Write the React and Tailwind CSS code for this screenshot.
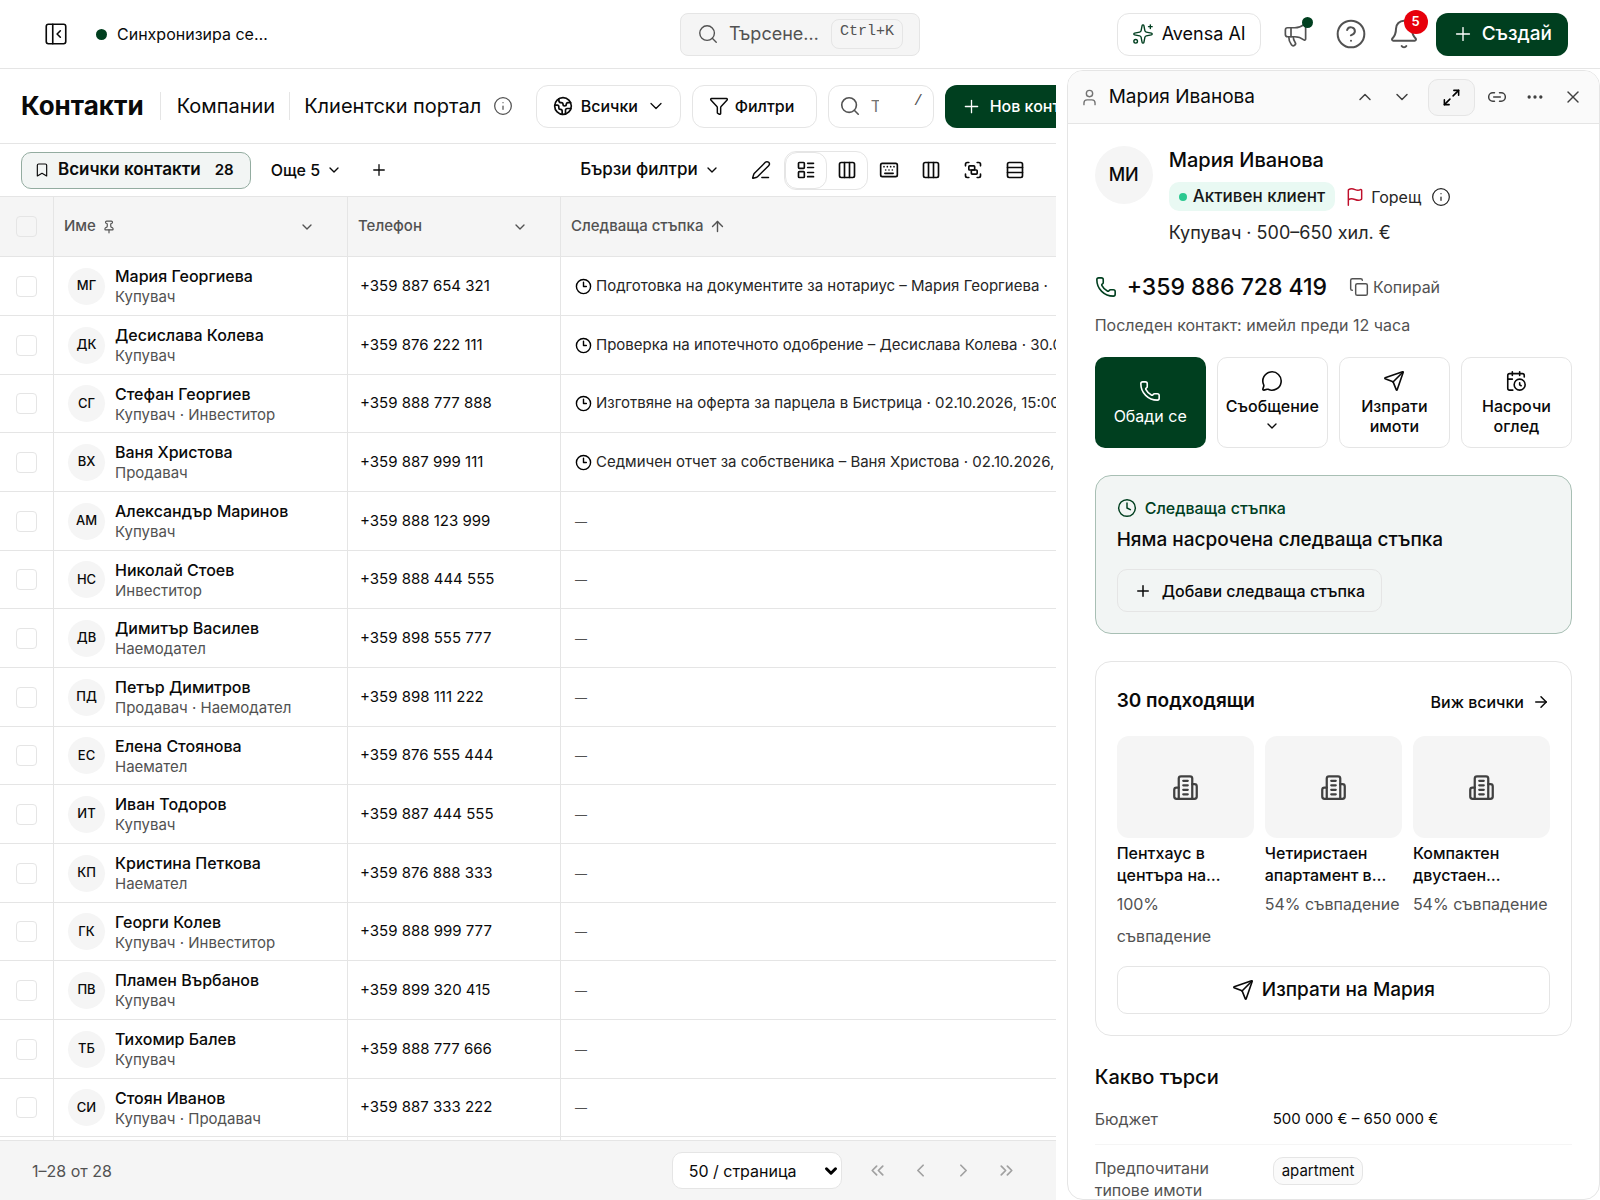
import {
  ArrowRight,
  ArrowUp,
  Bell,
  Bookmark,
  CalendarClock,
  ChevronDown,
  ChevronLeft,
  ChevronRight,
  ChevronsLeft,
  ChevronsRight,
  ChevronUp,
  CircleHelp,
  Clock,
  Clock3,
  Columns3,
  Copy,
  Earth,
  Ellipsis,
  Filter,
  Flag,
  Group,
  Info,
  Keyboard,
  LayoutList,
  Link2,
  Maximize2,
  Megaphone,
  MessageCircle,
  PanelLeftClose,
  PenLine,
  Phone,
  Pin,
  Plus,
  Rows3,
  Search,
  Send,
  Sparkles,
  User,
  X,
} from "lucide-react";

const contacts = [
  { initials: "МГ", name: "Мария Георгиева", role: "Купувач", phone: "+359 887 654 321", next: "Подготовка на документите за нотариус – Мария Георгиева ·" },
  { initials: "ДК", name: "Десислава Колева", role: "Купувач", phone: "+359 876 222 111", next: "Проверка на ипотечното одобрение – Десислава Колева · 30.09.2026" },
  { initials: "СГ", name: "Стефан Георгиев", role: "Купувач · Инвеститор", phone: "+359 888 777 888", next: "Изготвяне на оферта за парцела в Бистрица · 02.10.2026, 15:00" },
  { initials: "ВХ", name: "Ваня Христова", role: "Продавач", phone: "+359 887 999 111", next: "Седмичен отчет за собственика – Ваня Христова · 02.10.2026," },
  { initials: "АМ", name: "Александър Маринов", role: "Купувач", phone: "+359 888 123 999" },
  { initials: "НС", name: "Николай Стоев", role: "Инвеститор", phone: "+359 888 444 555" },
  { initials: "ДВ", name: "Димитър Василев", role: "Наемодател", phone: "+359 898 555 777" },
  { initials: "ПД", name: "Петър Димитров", role: "Продавач · Наемодател", phone: "+359 898 111 222" },
  { initials: "ЕС", name: "Елена Стоянова", role: "Наемател", phone: "+359 876 555 444" },
  { initials: "ИТ", name: "Иван Тодоров", role: "Купувач", phone: "+359 887 444 555" },
  { initials: "КП", name: "Кристина Петкова", role: "Наемател", phone: "+359 876 888 333" },
  { initials: "ГК", name: "Георги Колев", role: "Купувач · Инвеститор", phone: "+359 888 999 777" },
  { initials: "ПВ", name: "Пламен Върбанов", role: "Купувач", phone: "+359 899 320 415" },
  { initials: "ТБ", name: "Тихомир Балев", role: "Купувач", phone: "+359 888 777 666" },
  { initials: "СИ", name: "Стоян Иванов", role: "Купувач · Продавач", phone: "+359 887 333 222" },
];

const matches = [
  { title: "Пентхаус в центъра на…", score: "100% съвпадение" },
  { title: "Четиристаен апартамент в…", score: "54% съвпадение" },
  { title: "Компактен двустаен…", score: "54% съвпадение" },
];

const BuildingIcon = () => (
  <svg
    width="27"
    height="27"
    viewBox="0 0 24 24"
    fill="none"
    stroke="currentColor"
    strokeWidth="2"
    strokeLinecap="round"
    strokeLinejoin="round"
    aria-hidden="true"
  >
    <path d="M6 22V4a2 2 0 0 1 2-2h8a2 2 0 0 1 2 2v18Z" />
    <path d="M6 12H4a2 2 0 0 0-2 2v6a2 2 0 0 0 2 2h2" />
    <path d="M18 9h2a2 2 0 0 1 2 2v9a2 2 0 0 1-2 2h-2" />
    <path d="M10 6h4M10 10h4M10 14h4M10 18h4" />
  </svg>
);

const Checkbox = ({ label }) => (
  <input
    type="checkbox"
    aria-label={label}
    className="block mx-auto size-[21px] appearance-none rounded border border-neutral-200 checked:bg-[#003f1f]"
  />
);

/* ---------- Top bar ---------- */

const TopBar = () => (
  <header className="flex h-[69px] shrink-0 items-center justify-between border-b border-neutral-200 px-8">
    <div className="flex flex-1 items-center">
      <button type="button" aria-label="Меню" className="ml-[11px]">
        <PanelLeftClose size={26} strokeWidth={1.5} />
      </button>
      <span className="ml-[27px] size-[11px] rounded-full bg-[#003f1f]" />
      <span className="ml-2.5">Синхронизира се…</span>
    </div>

    <button
      type="button"
      className="flex h-[43px] w-60 items-center rounded-lg border border-neutral-200 bg-neutral-100 pl-4 text-lg text-neutral-600"
    >
      <Search size={22} strokeWidth={1.5} />
      <span className="ml-2.5">Търсене…</span>
      <kbd className="ml-auto mr-4 flex h-[30px] w-[72px] justify-center rounded-lg border border-neutral-200 pt-0.5 text-[15px] leading-5 font-[Liberation_Mono,monospace]">
        Ctrl+K
      </kbd>
    </button>

    <div className="flex flex-1 items-center justify-end">
      <button
        type="button"
        className="flex h-[43px] items-center gap-2 rounded-xl border border-neutral-200 px-3.5 text-lg"
      >
        <Sparkles size={22} strokeWidth={1.5} className="text-[#003f1f]" />
        Avensa AI
      </button>
      <button type="button" aria-label="Новини" className="relative ml-[21px] text-neutral-600">
        <Megaphone size={27} strokeWidth={1.5} />
        <span className="absolute -top-1 -right-1 size-[11px] rounded-full bg-[#003f1f]" />
      </button>
      <button type="button" aria-label="Помощ" className="ml-[26px] text-neutral-600">
        <CircleHelp size={32} strokeWidth={1.5} />
      </button>
      <button type="button" aria-label="Известия" className="relative ml-[21px] text-neutral-600">
        <Bell size={32} strokeWidth={1.5} />
        <span className="absolute -top-2 -right-2 flex size-6 items-center justify-center rounded-full bg-red-600 text-[13px] font-semibold text-white">
          5
        </span>
      </button>
      <button
        type="button"
        className="ml-4 flex h-[43px] items-center gap-2 rounded-xl bg-[#003f1f] px-4 text-[19px] font-medium text-white"
      >
        <Plus size={22} strokeWidth={1.5} />
        Създай
      </button>
    </div>
  </header>
);

/* ---------- Contacts list ---------- */

const PageTabs = () => (
  <div className="flex h-[75px] shrink-0 items-center overflow-hidden border-b border-neutral-200 pl-[21px] whitespace-nowrap">
    <nav className="flex shrink-0 items-center text-xl">
      <a href="#contacts" className="text-[26px] font-bold">
        Контакти
      </a>
      <a href="#companies" className="ml-4 border-l border-neutral-200 pl-4">
        Компании
      </a>
      <a href="#portal" className="ml-3.5 border-l border-neutral-200 pl-3.5">
        Клиентски портал
      </a>
    </nav>
    <button type="button" aria-label="Информация" className="ml-3 shrink-0 text-neutral-600">
      <Info size={20} strokeWidth={1.5} />
    </button>
    <div className="ml-auto flex shrink-0 items-center gap-[11px] font-medium">
      <button
        type="button"
        className="flex h-[43px] w-[145px] items-center gap-2 rounded-xl border border-neutral-200 pl-4"
      >
        <Earth size={20} />
        Всички
        <ChevronDown size={20} strokeWidth={1.5} />
      </button>
      <button
        type="button"
        className="flex h-[43px] w-[125px] items-center gap-1.5 rounded-xl border border-neutral-200 pl-4"
      >
        <Filter size={20} strokeWidth={1.75} />
        Филтри
      </button>
      <label className="flex h-[43px] w-[106px] items-center rounded-xl border border-neutral-200 pl-2.5 pr-2.5 text-neutral-600">
        <Search size={22} strokeWidth={1.75} className="shrink-0" />
        <input
          type="text"
          aria-label="Търсене"
          placeholder="Търсене"
          className="ml-2.5 w-2 min-w-0 font-normal outline-none placeholder:text-neutral-500"
        />
        <kbd className="ml-auto mb-2 text-[15px] leading-4 font-normal font-[Liberation_Mono,monospace]">/</kbd>
      </label>
      <button
        type="button"
        className="-mr-10 flex h-[43px] w-[151px] items-center gap-2 rounded-xl bg-[#003f1f] pl-4 text-white"
      >
        <Plus size={21} strokeWidth={1.5} className="shrink-0" />
        Нов контакт
      </button>
    </div>
  </div>
);

const ViewBar = () => (
  <div className="flex h-[53px] shrink-0 items-center border-b border-neutral-200 pl-[21px] pr-5 whitespace-nowrap">
    <button
      type="button"
      className="flex h-[37px] items-center rounded-[10px] border border-[#93aca0] bg-[#f2f5f4] px-3 text-[17px] font-semibold"
    >
      <Bookmark size={16} strokeWidth={1.75} />
      <span className="ml-2">Всички контакти</span>
      <span className="ml-3.5 mr-1 text-[15px]">28</span>
    </button>
    <button type="button" className="ml-5 flex items-center gap-1.5 font-medium">
      Още 5
      <ChevronDown size={16} />
    </button>
    <button type="button" aria-label="Нов изглед" className="ml-7">
      <Plus size={18} strokeWidth={1.75} />
    </button>

    <button type="button" className="ml-auto flex items-center gap-1.5 text-[17px] font-medium">
      Бързи филтри
      <ChevronDown size={16} />
    </button>
    <button type="button" aria-label="Редактирай" className="ml-5 mr-0.5 flex w-[42px] justify-center">
      <PenLine size={20} strokeWidth={1.75} />
    </button>
    <div className="flex h-[39px] items-center rounded-xl border border-neutral-200">
      <button
        type="button"
        aria-label="Списък"
        className="flex h-[37px] w-[42px] items-center justify-center rounded-xl border border-neutral-200"
      >
        <LayoutList size={20} />
      </button>
      <button type="button" aria-label="Табло" className="flex w-10 justify-center">
        <Columns3 size={20} />
      </button>
    </div>
    <button type="button" aria-label="Клавиши" className="flex w-[42px] justify-center">
      <Keyboard size={20} />
    </button>
    <button type="button" aria-label="Колони" className="flex w-[42px] justify-center">
      <Columns3 size={20} />
    </button>
    <button type="button" aria-label="Групиране" className="flex w-[42px] justify-center">
      <Group size={20} />
    </button>
    <button type="button" aria-label="Редове" className="flex w-[42px] justify-center">
      <Rows3 size={20} />
    </button>
  </div>
);

const ContactsTable = () => (
  <div className="min-h-0 flex-1 overflow-hidden">
    <table className="w-full table-fixed border-separate border-spacing-0 [&_td]:border-b [&_td]:border-neutral-200 [&_td:not(:last-child)]:border-r [&_th]:border-b [&_th]:border-neutral-200 [&_th:not(:last-child)]:border-r">
      <colgroup>
        <col className="w-[54px]" />
        <col className="w-[294px]" />
        <col className="w-[213px]" />
        <col />
      </colgroup>
      <thead>
        <tr className="h-[60px] bg-neutral-100 text-left text-[15px] text-neutral-600">
          <th scope="col">
            <Checkbox label="Избери всички" />
          </th>
          <th scope="col" className="pl-2.5 pr-8 font-medium">
            <div className="flex items-center gap-1.5">
              Име
              <Pin size={14} />
              <ChevronDown size={16} className="ml-auto" />
            </div>
          </th>
          <th scope="col" className="pl-2.5 pr-8 font-medium">
            <div className="flex items-center">
              Телефон
              <ChevronDown size={16} className="ml-auto" />
            </div>
          </th>
          <th scope="col" className="pl-2.5 font-medium">
            <div className="flex items-center gap-1.5">
              Следваща стъпка
              <ArrowUp size={17} />
            </div>
          </th>
        </tr>
      </thead>
      <tbody>
        {contacts.map((contact) => (
          <tr key={contact.phone} className="h-[59px] nth-[3n]:h-[58px]">
            <td>
              <Checkbox label={contact.name} />
            </td>
            <td className="pl-3.5">
              <div className="flex items-center gap-2.5">
                <span className="flex size-[37px] items-center justify-center rounded-full bg-neutral-100 text-[13px] font-medium">
                  {contact.initials}
                </span>
                <span className="pt-0.5">
                  <span className="block leading-5 font-medium">{contact.name}</span>
                  <span className="block text-[15px] leading-[22px] text-neutral-600">{contact.role}</span>
                </span>
              </div>
            </td>
            <td className="pl-3 text-[15px]">{contact.phone}</td>
            <td className="overflow-hidden pl-3.5 text-[15px] whitespace-nowrap">
              {contact.next ? (
                <div className="flex items-center gap-1 text-neutral-800">
                  <Clock3 size={17} className="shrink-0 text-black" />
                  {contact.next}
                </div>
              ) : (
                <span className="text-xs text-neutral-600">—</span>
              )}
            </td>
          </tr>
        ))}
        <tr className="h-[59px]">
          <td />
          <td />
          <td />
          <td />
        </tr>
      </tbody>
    </table>
  </div>
);

const Pagination = () => (
  <footer className="flex h-[60px] shrink-0 items-center border-t border-neutral-200 bg-neutral-100 pl-8 pr-7">
    <span className="text-neutral-600">1–28 от 28</span>
    <div className="relative ml-auto mr-3.5">
      <select
        aria-label="Редове на страница"
        className="block h-[37px] w-[170px] appearance-none rounded-[10px] border border-neutral-200 bg-white px-4"
      >
        <option>50 / страница</option>
      </select>
      <ChevronDown
        size={18}
        strokeWidth={4}
        className="pointer-events-none absolute top-2.5 right-0.5 text-black"
      />
    </div>
    <div className="flex text-neutral-400 [&_button]:flex [&_button]:w-[43px] [&_button]:justify-center">
      <button type="button" aria-label="Първа страница" disabled>
        <ChevronsLeft size={21} />
      </button>
      <button type="button" aria-label="Предишна страница" disabled>
        <ChevronLeft size={21} />
      </button>
      <button type="button" aria-label="Следваща страница" disabled>
        <ChevronRight size={21} />
      </button>
      <button type="button" aria-label="Последна страница" disabled>
        <ChevronsRight size={21} />
      </button>
    </div>
  </footer>
);

/* ---------- Contact panel ---------- */

const PanelHeader = () => (
  <div className="flex h-[53px] shrink-0 items-center border-b border-neutral-200 bg-neutral-50 px-3">
    <User size={19} strokeWidth={1.75} className="text-neutral-500" />
    <span className="ml-2.5 text-[19px]">Мария Иванова</span>
    <div className="ml-auto flex items-center text-neutral-700 [&_button]:flex [&_button]:justify-center">
      <button type="button" aria-label="Предишен" className="w-[37px]">
        <ChevronUp size={20} strokeWidth={1.75} />
      </button>
      <button type="button" aria-label="Следващ" className="w-[37px]">
        <ChevronDown size={20} strokeWidth={1.75} />
      </button>
      <button
        type="button"
        aria-label="Разшири"
        className="mx-2 h-[37px] w-[47px] items-center rounded-[10px] border border-neutral-200 bg-neutral-100 text-black"
      >
        <Maximize2 size={19} strokeWidth={2} />
      </button>
      <button type="button" aria-label="Връзка" className="w-7">
        <Link2 size={20} strokeWidth={1.75} />
      </button>
      <button type="button" aria-label="Още" className="ml-2.5 w-7">
        <Ellipsis size={20} />
      </button>
      <button type="button" aria-label="Затвори" className="ml-2.5 w-7">
        <X size={20} strokeWidth={1.75} />
      </button>
    </div>
  </div>
);

const ActionButton = ({ icon: Icon, children }) => (
  <button
    type="button"
    className="flex h-[91px] flex-col items-center justify-center gap-1 rounded-[10px] border border-neutral-200 leading-5 font-medium"
  >
    <Icon size={22} strokeWidth={1.75} />
    <span>{children}</span>
  </button>
);

const ContactPanel = () => (
  <aside className="mt-px flex w-1/3 shrink-0 flex-col overflow-hidden rounded-2xl border border-neutral-200">
    <PanelHeader />
    <div className="min-h-0 flex-1 overflow-hidden px-[27px] pt-[22px]">
      <div className="flex items-start gap-4">
        <span className="flex size-[58px] shrink-0 items-center justify-center rounded-full bg-neutral-100 text-lg font-medium">
          МИ
        </span>
        <div>
          <h2 className="text-xl font-medium">Мария Иванова</h2>
          <div className="mt-2 flex items-center text-neutral-800">
            <span className="flex h-[29px] items-center gap-1.5 rounded-[10px] bg-[#e9f9f3] px-2.5 text-[17px] font-medium text-neutral-900">
              <span className="size-2 rounded-full bg-[#2bc890]" />
              Активен клиент
            </span>
            <Flag size={20} strokeWidth={1.75} className="ml-2.5 text-[#bf0f2b]" />
            <span className="ml-1.5">Горещ</span>
            <Info size={20} strokeWidth={1.5} className="ml-2.5" />
          </div>
          <p className="mt-2 text-lg text-neutral-800">Купувач · 500–650 хил. €</p>
        </div>
      </div>

      <div className="mt-6 flex items-center">
        <Phone size={22} strokeWidth={1.75} className="text-[#003f1f]" />
        <a href="tel:+359886728419" className="ml-2.5 text-[23px] leading-8 font-medium">
          +359 886 728 419
        </a>
        <button type="button" className="ml-[22px] flex items-center gap-1 text-neutral-600">
          <Copy size={20} strokeWidth={1.75} />
          Копирай
        </button>
      </div>
      <p className="mt-2.5 text-neutral-600">Последен контакт: имейл преди 12 часа</p>

      <div className="mt-5 grid grid-cols-4 gap-[11px]">
        <button
          type="button"
          className="flex h-[91px] flex-col items-center justify-center gap-1 rounded-[10px] bg-[#003f1f] leading-5 text-white"
        >
          <Phone size={22} strokeWidth={1.75} />
          Обади се
        </button>
        <ActionButton icon={MessageCircle}>
          Съобщение
          <ChevronDown size={16} className="mx-auto my-0.5" />
        </ActionButton>
        <ActionButton icon={Send}>Изпрати имоти</ActionButton>
        <ActionButton icon={CalendarClock}>Насрочи оглед</ActionButton>
      </div>

      <section className="mt-[27px] rounded-2xl border border-[#a8bfb4] bg-[#f2f5f4] px-[21px] pt-5 pb-[21px]">
        <p className="flex items-center gap-2 font-medium text-[#003f1f]">
          <Clock size={20} strokeWidth={1.75} />
          Следваща стъпка
        </p>
        <h3 className="mt-1.5 text-[19px] leading-7 font-medium">Няма насрочена следваща стъпка</h3>
        <button
          type="button"
          className="mt-[15px] flex h-[43px] items-center gap-2.5 rounded-[10px] border border-neutral-200 px-4 font-medium"
        >
          <Plus size={18} strokeWidth={2} />
          Добави следваща стъпка
        </button>
      </section>

      <section className="mt-[27px] rounded-2xl border border-neutral-200 px-[21px] py-[21px]">
        <div className="flex h-[37px] items-center justify-between">
          <h3 className="text-[19px] font-semibold">30 подходящи</h3>
          <a href="#matches" className="flex items-center gap-2 font-medium">
            Виж всички
            <ArrowRight size={18} />
          </a>
        </div>
        <div className="mt-4 grid grid-cols-3 gap-[11px]">
          {matches.map((match) => (
            <article key={match.title}>
              <div className="flex h-[102px] items-center justify-center rounded-xl bg-neutral-100 text-neutral-700">
                <BuildingIcon />
              </div>
              <h4 className="mt-1 leading-[22px] font-medium">{match.title}</h4>
              <p className="mt-0.5 leading-8 text-neutral-600">{match.score}</p>
            </article>
          ))}
        </div>
        <button
          type="button"
          className="mt-3.5 flex h-12 w-full items-center justify-center gap-2 rounded-[10px] border border-neutral-200 text-[19px] font-medium"
        >
          <Send size={22} strokeWidth={1.75} />
          Изпрати на Мария
        </button>
      </section>

      <h3 className="mt-[27px] text-xl font-medium">Какво търси</h3>
      <dl className="leading-[22px]">
        <div className="grid grid-cols-[178px_1fr] border-b border-neutral-100 pt-[17px] pb-3.5">
          <dt className="text-neutral-600">Бюджет</dt>
          <dd className="text-[15px]">500 000 € – 650 000 €</dd>
        </div>
        <div className="grid grid-cols-[178px_1fr] items-start pt-3">
          <dt className="pr-4 text-neutral-600">Предпочитани типове имоти</dt>
          <dd className="justify-self-start rounded-[10px] border border-neutral-200 bg-neutral-50 px-2 py-0.5 text-[15px]">
            apartment
          </dd>
        </div>
      </dl>
    </div>
  </aside>
);

const App = () => {
  return (
    <div
      lang="bg"
      className="flex h-screen flex-col overflow-hidden bg-white text-base text-neutral-950 font-[Inter,sans-serif]"
    >
      <TopBar />
      <div className="flex min-h-0 flex-1 gap-[11px]">
        <main className="flex min-w-0 flex-1 flex-col">
          <PageTabs />
          <ViewBar />
          <ContactsTable />
          <Pagination />
        </main>
        <ContactPanel />
      </div>
    </div>
  );
};

export default App;
